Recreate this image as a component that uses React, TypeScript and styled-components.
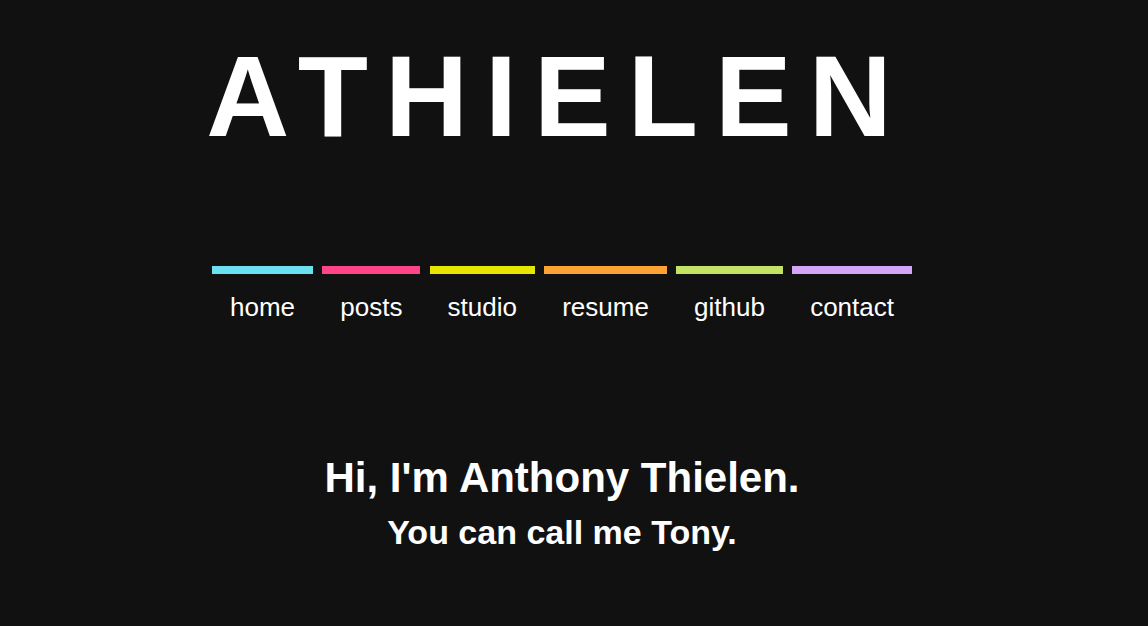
import React from "react";
import styled, { createGlobalStyle } from "styled-components";

const GlobalStyle = createGlobalStyle`
  html, body {
    margin: 0;
    padding: 0;
    background: #111111;
  }
  body {
    font-family: "Liberation Sans", Arial, Helvetica, sans-serif;
    color: #ffffff;
  }
`;

const Page = styled.div`
  min-height: 626px;
  display: flex;
  flex-direction: column;
  align-items: center;
  padding: 30px 24px 0 0;
  box-sizing: border-box;
`;

const Title = styled.h1`
  margin: 0;
  padding-right: 9px;
  font-size: 115px;
  line-height: 132px;
  font-weight: 700;
  letter-spacing: 17px;
  text-transform: uppercase;
`;

const Nav = styled.nav`
  width: 700px;
  margin-top: 104px;
  display: flex;
  justify-content: space-between;
`;

const NavItem = styled.a<{ $color: string }>`
  display: flex;
  flex-direction: column;
  align-items: center;
  padding: 18px 18px 0;
  border-top: 8px solid ${(p) => p.$color};
  color: #ffffff;
  text-decoration: none;
  font-size: 26px;
  line-height: 30px;
`;

const Intro = styled.section`
  margin-top: 132px;
  display: flex;
  flex-direction: column;
  align-items: center;
`;

const Greeting = styled.h2`
  margin: 0;
  font-size: 42px;
  line-height: 48px;
  font-weight: 700;
`;

const Sub = styled.h3`
  margin: 10px 0 0;
  font-size: 34px;
  line-height: 40px;
  font-weight: 700;
`;

const links = [
  { label: "home", color: "#6ae0f0" },
  { label: "posts", color: "#ff4488" },
  { label: "studio", color: "#e8e600" },
  { label: "resume", color: "#ffa133" },
  { label: "github", color: "#c4e264" },
  { label: "contact", color: "#d3a4f8" },
];

export default function App() {
  return (
    <>
      <GlobalStyle />
      <Page>
        <Title>athielen</Title>
        <Nav>
          {links.map((l) => (
            <NavItem key={l.label} href="#" $color={l.color}>
              {l.label}
            </NavItem>
          ))}
        </Nav>
        <Intro>
          <Greeting>Hi, I'm Anthony Thielen.</Greeting>
          <Sub>You can call me Tony.</Sub>
        </Intro>
      </Page>
    </>
  );
}
